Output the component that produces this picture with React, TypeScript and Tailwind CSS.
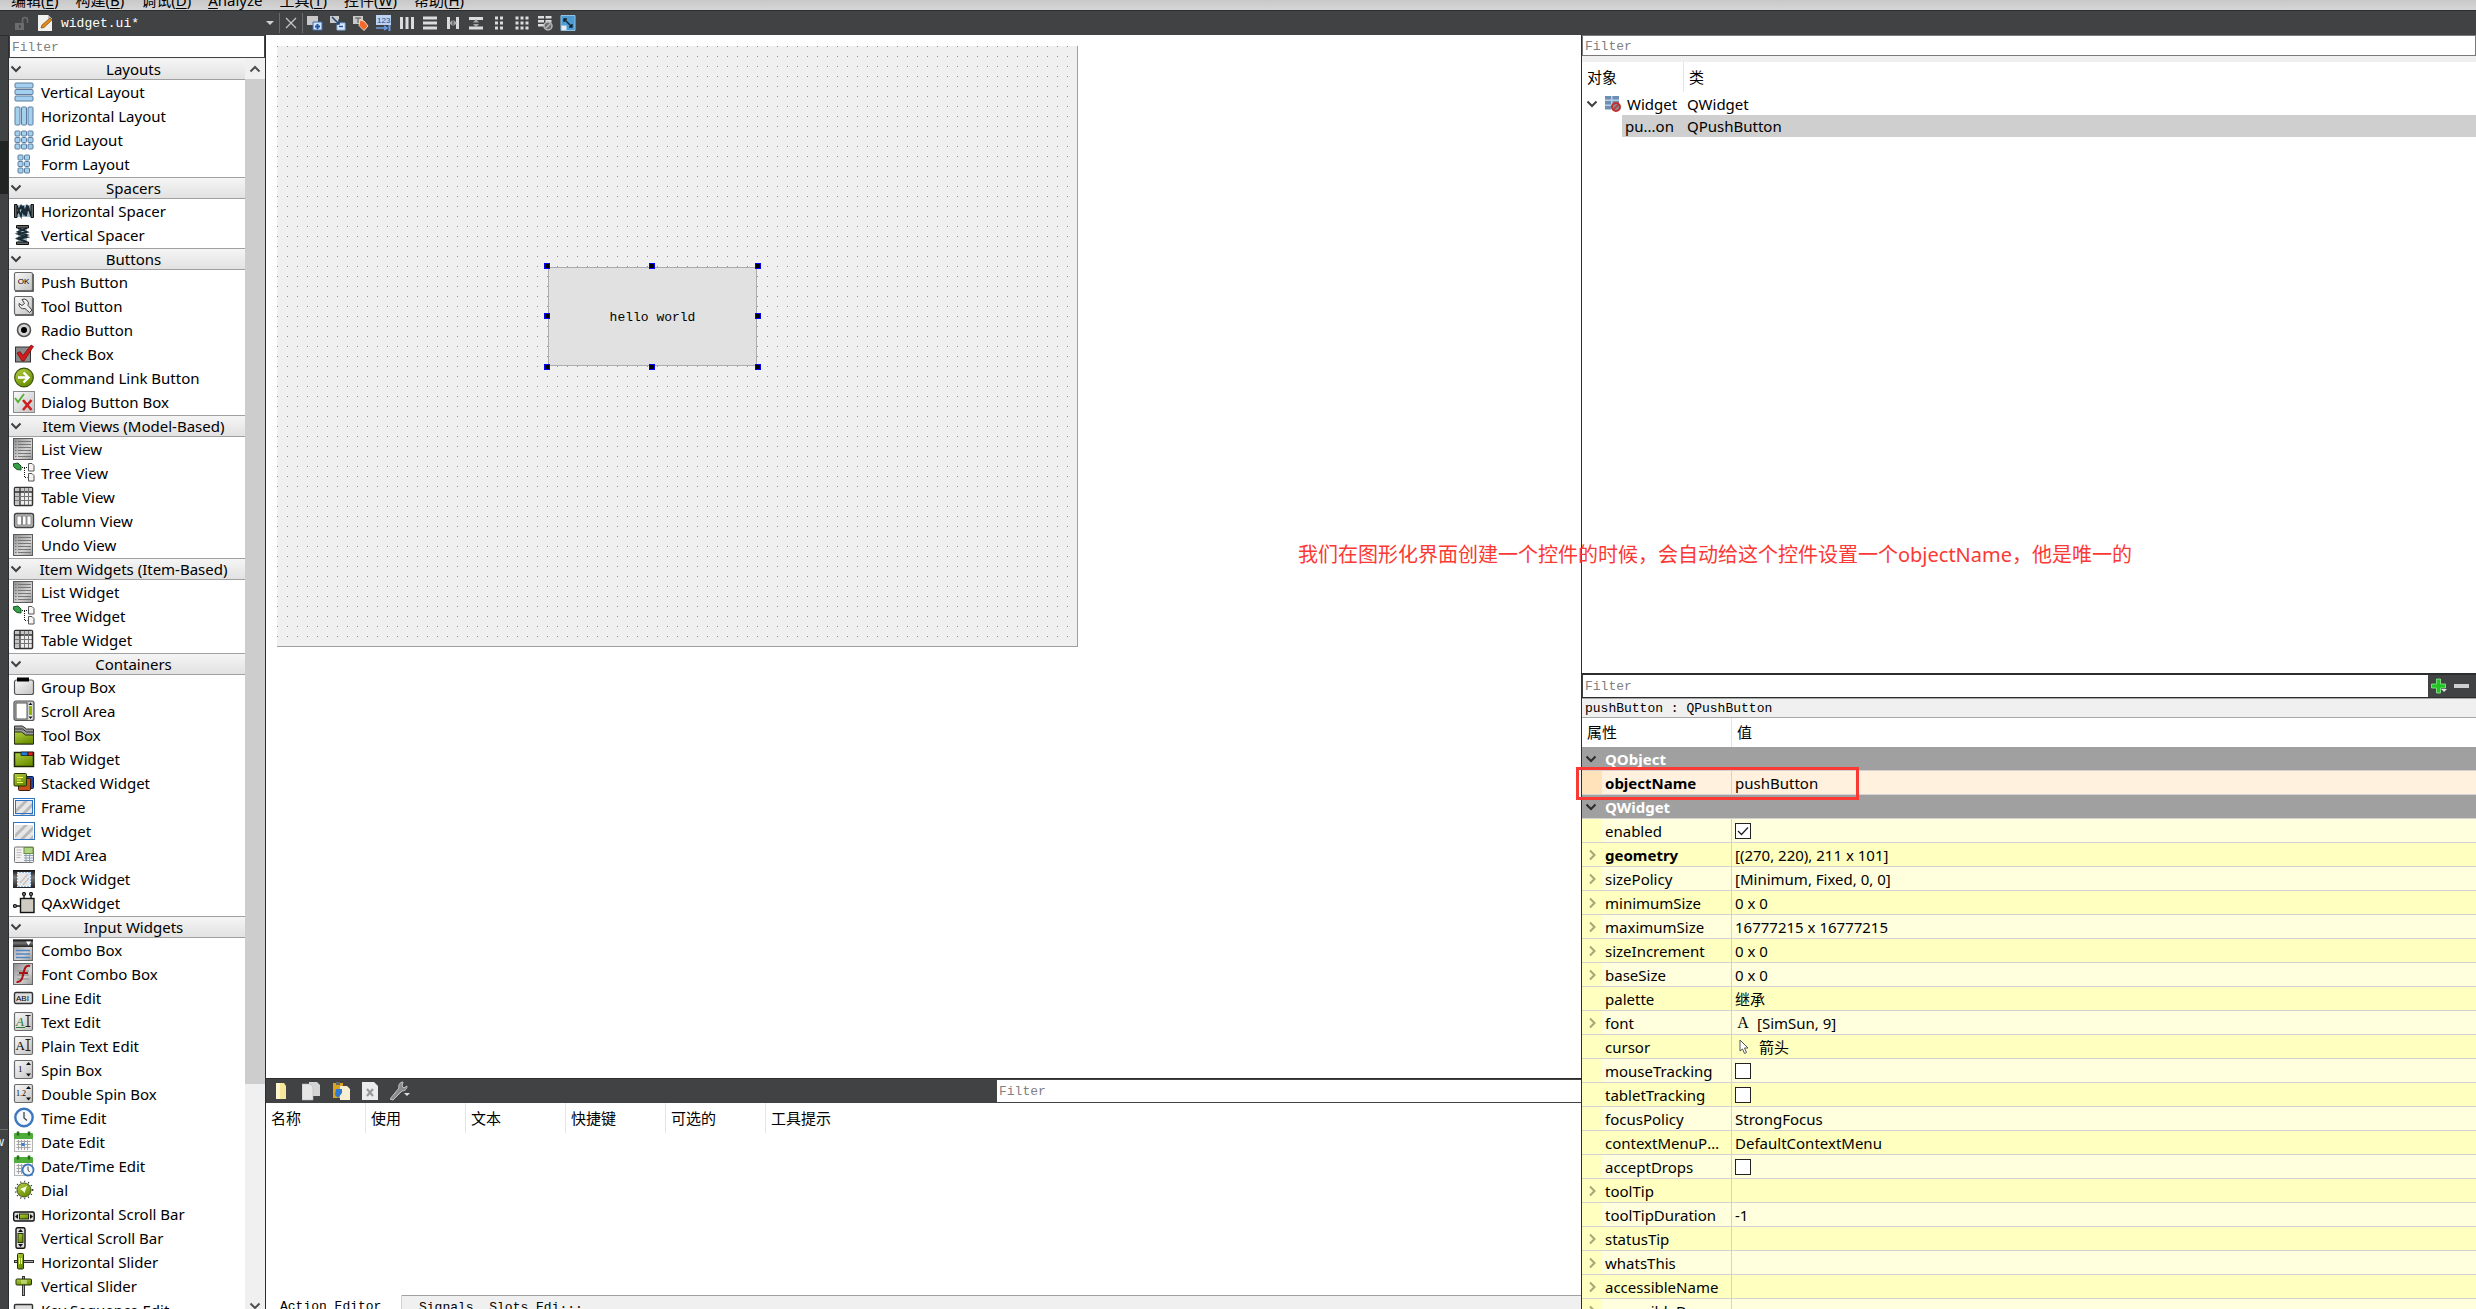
import React from "react";

interface PaletteItem {
  label: string;
  icon: React.ReactNode;
}

interface PaletteGroup {
  title: string;
  items: PaletteItem[];
}

interface PropertyRow {
  name: string;
  value?: React.ReactNode;
  checked?: boolean;
  expandable?: boolean;
  modified?: boolean;
}

const bar = "fill-[#a4d0f0] stroke-[#5f7c9c]";

const Cells: React.FC<{ xs: number[]; ys: number[]; size: number }> = ({ xs, ys, size }) => (
  <g className={bar}>
    {ys.map((y) =>
      xs.map((x) => (
        <rect key={`${x}-${y}`} x={x} y={y} width={size} height={size} rx={1} />
      ))
    )}
  </g>
);

const listIcon = (
  <g>
    <rect x={0.5} y={0.5} width={19} height={21} fill="url(#steel)" stroke="#5c5c5c" />
    <path d="M2 3.5h1.5M2 6.5h1.5M2 9.5h1.5M2 12.5h1.5M2 15.5h1.5M2 18.5h1.5M5 3.5h13M5 6.5h13M5 9.5h13M5 12.5h13M5 15.5h13M5 18.5h13" stroke="#777" />
  </g>
);

const treeIcon = (
  <g>
    <path d="M0 2l5-1 3 3v4l-4-.5-3-2.500z" fill="#35a047" stroke="#14551f" />
    <path d="M9 5.500h5M11.500 6v9.500h3" fill="none" stroke="#111" strokeDasharray="1 1" />
    <path d="M15.500 1.500h3.500l2 2v5.500h-5.500zM15.500 11.500h3.500l2 2v5.500h-5.500z" fill="#f4f4f4" stroke="#555" />
  </g>
);

const tableIcon = (
  <g>
    <rect x={1.5} y={1.5} width={18} height={18} rx={1} fill="#eee" stroke="#333" strokeWidth={1.5} />
    <path d="M2 2h5v17H2zM2 2h17v4H2z" fill="#c4c4c4" />
    <path d="M7 2v17M2 6h17" stroke="#333" strokeWidth={1.3} />
    <path d="M2 10.500h17M2 14.500h17M11.500 2v17M15.500 2v17" stroke="#777" />
  </g>
);

const hatch = (
  <g>
    <rect x={2} y={5} width={18} height={14} fill="#e6e6e6" />
    <path d="M2 14l9-9h4L2 18zM7 19L20 6v4l-9 9zM16 19l4-4v4z" fill="#b9b9b9" />
  </g>
);

const clockFace = (
  <g>
    <circle cx={11} cy={10.5} r={8.7} fill="#f4f8fc" stroke="#3c76bd" strokeWidth={2.4} />
    <path d="M11 5v6l3 2.500" fill="none" stroke="#444" strokeWidth={1.3} />
  </g>
);

const calendar = (
  <g>
    <rect x={1.5} y={3.5} width={18} height={17} fill="#f7f7f7" stroke="#b5b5b5" />
    <rect x={1} y={2} width={19} height={6} rx={1} fill="#4fae3a" />
    <path d="M5 .5v4M16 .5v4" stroke="#2a6d1d" strokeWidth={2.5} />
    <path d="M3.500 10.500h14M3.500 13.500h14M3.500 16.500h14M5.500 9v10M8.500 9v10M11.500 9v10M14.500 9v10" stroke="#a5a5a5" />
  </g>
);

const plate = <rect x={1.5} y={1.5} width={18} height={18} rx={1.5} fill="url(#plate)" stroke="#6a6a6a" strokeWidth={1.2} />;

const spinArrows = <path d="M13 6l2.500-3 2.500 3zM13 14.500l2.500 3 2.500-3z" fill="#111" />;

const groups: PaletteGroup[] = [
  {
    title: "Layouts",
    items: [
      {
        label: "Vertical Layout",
        icon: (
          <g className={bar}>
            <rect x={2} y={2} width={18} height={5} rx={1} />
            <rect x={2} y={8.500} width={18} height={5} rx={1} />
            <rect x={2} y={15} width={18} height={5} rx={1} />
          </g>
        ),
      },
      {
        label: "Horizontal Layout",
        icon: (
          <g className={bar}>
            <rect x={2} y={2} width={5} height={18} rx={1} />
            <rect x={8.500} y={2} width={5} height={18} rx={1} />
            <rect x={15} y={2} width={5} height={18} rx={1} />
          </g>
        ),
      },
      { label: "Grid Layout", icon: <Cells xs={[2, 8.5, 15]} ys={[2, 8.5, 15]} size={5} /> },
      { label: "Form Layout", icon: <Cells xs={[5, 11.5]} ys={[2, 8.5, 15]} size={5} /> },
    ],
  },
  {
    title: "Spacers",
    items: [
      {
        label: "Horizontal Spacer",
        icon: (
          <g>
            <path d="M4 5h14v12H4z" fill="#9fbccb" />
            <path d="M4 6l4 10 2-10 3 10 2-10 3 10M4 14l4-8 3 8 3-8 4 8" fill="none" stroke="#1c2a33" strokeWidth={1.8} />
            <path d="M1.500 4.500h2.500v13H1.500zM18 4.500h2.500v13H18z" fill="#666" stroke="#111" />
          </g>
        ),
      },
      {
        label: "Vertical Spacer",
        icon: (
          <g>
            <path d="M5 4h9v14H5z" fill="#9fbccb" />
            <path d="M5 4l9 4-9 2 9 3-9 2 9 3M14 4l-9 4 9 3-9 3 9 4" fill="none" stroke="#1c2a33" strokeWidth={1.8} />
            <path d="M3.500 1.500h12v2.500h-12zM3.500 18h12v2.500h-12z" fill="#666" stroke="#111" />
          </g>
        ),
      },
    ],
  },
  {
    title: "Buttons",
    items: [
      {
        label: "Push Button",
        icon: (
          <g>
            <path d="M2 20h18V3" fill="none" stroke="#333" strokeWidth={1.5} />
            {plate}
            <text x={10.5} y={12.5} textAnchor="middle" fontSize={8} className="font-['Liberation_Sans']">OK</text>
          </g>
        ),
      },
      {
        label: "Tool Button",
        icon: (
          <g>
            <path d="M2 20h18V3" fill="none" stroke="#333" strokeWidth={1.5} />
            {plate}
            <path d="M9 4.500a4.500 4.500 0 0 1 6 6l4 4.500-2.500 2.500-4.500-4a4.500 4.500 0 0 1-6-5l3 2 2.500-2z" fill="#eee" stroke="#444" />
          </g>
        ),
      },
      {
        label: "Radio Button",
        icon: (
          <g>
            <circle cx={11} cy={11} r={6.5} fill="#d6d6d6" stroke="#555" strokeWidth={1.6} />
            <circle cx={11} cy={11} r={3} fill="#000" />
          </g>
        ),
      },
      {
        label: "Check Box",
        icon: (
          <g>
            <rect x={2.5} y={4} width={15} height={15} fill="#8a8a8a" stroke="#333" />
            <path d="M4 10l3-1.500 3 4L18 2l2.500 1.500L11 18H9z" fill="#d5191b" stroke="#6d0b0c" strokeWidth={0.7} />
          </g>
        ),
      },
      {
        label: "Command Link Button",
        icon: (
          <g>
            <circle cx={11} cy={10.5} r={9.3} fill="url(#lime)" stroke="#3d5208" strokeWidth={1.2} />
            <path d="M5 10.500h10M10.500 5.500l5 5-5 5" fill="none" stroke="#fff" strokeWidth={2.4} />
          </g>
        ),
      },
      {
        label: "Dialog Button Box",
        icon: (
          <g>
            <rect x={0.5} y={0.5} width={21} height={21} fill="url(#plate)" stroke="#8a8a8a" />
            <path d="M2 7l3 4 6-8" fill="none" stroke="#5bb03a" strokeWidth={2} />
            <path d="M10 9l8.500 10M18.500 9L10 19" stroke="#cc1f22" strokeWidth={2.6} />
          </g>
        ),
      },
    ],
  },
  {
    title: "Item Views (Model-Based)",
    items: [
      { label: "List View", icon: listIcon },
      { label: "Tree View", icon: treeIcon },
      { label: "Table View", icon: tableIcon },
      {
        label: "Column View",
        icon: (
          <g>
            <rect x={1.5} y={3.5} width={19} height={14} rx={2} fill="#bbb" stroke="#444" strokeWidth={1.4} />
            <path d="M4 6h4.500v9H4zM9.500 6H13v9H9.500zM14 6h4v9h-4z" fill="#fff" stroke="#777" strokeWidth={0.8} />
          </g>
        ),
      },
      { label: "Undo View", icon: listIcon },
    ],
  },
  {
    title: "Item Widgets (Item-Based)",
    items: [
      { label: "List Widget", icon: listIcon },
      { label: "Tree Widget", icon: treeIcon },
      { label: "Table Widget", icon: tableIcon },
    ],
  },
  {
    title: "Containers",
    items: [
      {
        label: "Group Box",
        icon: (
          <g>
            <rect x={1.5} y={4} width={19} height={14.500} rx={2} fill="url(#plate)" stroke="#555" strokeWidth={1.2} />
            <rect x={4} y={1.5} width={12} height={4} fill="#000" />
          </g>
        ),
      },
      {
        label: "Scroll Area",
        icon: (
          <g>
            <rect x={1} y={1} width={20} height={19.500} rx={2} fill="#b9b9b9" stroke="#555" strokeWidth={1.2} />
            <rect x={3} y={3} width={11} height={16} fill="#fff" stroke="#555" />
            <rect x={15.500} y={2.500} width={4} height={17} fill="#eee" />
            <path d="M15.500 5l2-2.500 2 2.500zM15.500 16.500l2 2.500 2-2.500z" fill="#111" />
            <rect x={16} y={6} width={3} height={9} fill="#8ab800" />
          </g>
        ),
      },
      {
        label: "Tool Box",
        icon: (
          <g>
            <path d="M1.500 2h8l4 3h7v15h-19z" fill="#999" stroke="#333" />
            <path d="M1.500 5h8l4 3h7" fill="none" stroke="#333" />
            <path d="M1.500 8h7l4 3h8v9h-19z" fill="url(#lime)" stroke="#26330a" />
          </g>
        ),
      },
      {
        label: "Tab Widget",
        icon: (
          <g>
            <rect x={1.500} y={4.500} width={19} height={14} fill="url(#lime)" stroke="#1c2606" strokeWidth={1.5} />
            <path d="M8 4h7v3.500H8z" fill="#1c7fe0" stroke="#111" strokeWidth={0.7} />
            <path d="M15 4h5v3.500h-5z" fill="#e02020" stroke="#111" strokeWidth={0.7} />
          </g>
        ),
      },
      {
        label: "Stacked Widget",
        icon: (
          <g>
            <rect x={8.500} y={4.500} width={12} height={12} rx={1} fill="#1b48a8" stroke="#0a1a3d" />
            <rect x={5.500} y={6.500} width={12} height={12} rx={1} fill="#c4501b" stroke="#461a06" />
            <rect x={1} y={1.500} width={12.500} height={12.500} rx={1} fill="url(#lime)" stroke="#26330a" />
            <path d="M4 5.500h6M4 8h4M4 10.500h6" stroke="#f4ff66" />
          </g>
        ),
      },
      {
        label: "Frame",
        icon: (
          <g>
            <rect x={0.5} y={2.500} width={21} height={17} fill="#fff" stroke="#2f74c4" />
            {hatch}
            <rect x={2.5} y={4.500} width={17} height={13} fill="none" stroke="#2f74c4" />
          </g>
        ),
      },
      {
        label: "Widget",
        icon: (
          <g>
            <rect x={0.5} y={2.500} width={21} height={17} fill="#fff" stroke="#2f74c4" />
            {hatch}
          </g>
        ),
      },
      {
        label: "MDI Area",
        icon: (
          <g>
            <rect x={1.500} y={3} width={19} height={15.500} rx={1} fill="#f3f3f3" stroke="#777" />
            <rect x={11} y={3.500} width={9} height={6} fill="#aed581" stroke="#6c8f48" />
            <path d="M3.500 6h5M3.500 8.500h5M3.500 11h5M3.500 13.500h4" stroke="#bbb" />
            <path d="M11 11.500h9M11 14h9M11 16.500h9M13 10v8M16.500 10v8" stroke="#8fa3b5" />
          </g>
        ),
      },
      {
        label: "Dock Widget",
        icon: (
          <g>
            <rect x={0} y={2} width={22} height={18} fill="url(#ebony)" />
            <rect x={4.500} y={4.500} width={13} height={14} fill="#e8e8e8" stroke="#2f74c4" />
            <rect x={4.500} y={4.500} width={13} height={14} fill="none" stroke="#fff" strokeDasharray="2 1" />
            <path d="M7 15l8-9M10 17l6-7" stroke="#c4c4c4" strokeWidth={1.5} />
          </g>
        ),
      },
      {
        label: "QAxWidget",
        icon: (
          <g stroke="#111" strokeWidth={1.4}>
            <rect x={7.500} y={6.500} width={13.500} height={14} fill="#cfcac2" />
            <path d="M11 6V3M18 6V3M7 14H3" />
            <circle cx={11} cy={2} r={1.4} fill="#fff" />
            <circle cx={18} cy={2} r={1.4} fill="#fff" />
            <circle cx={2} cy={14} r={1.4} fill="#fff" />
          </g>
        ),
      },
    ],
  },
  {
    title: "Input Widgets",
    items: [
      {
        label: "Combo Box",
        icon: (
          <g>
            <rect x={0.5} y={0.5} width={19} height={21} fill="url(#steel)" stroke="#666" />
            <rect x={0} y={1} width={20} height={7} fill="url(#ebony)" />
            <path d="M13 2.500h5l-2.500 4z" fill="#fff" />
            <path d="M3 11.500h14M3 15h14M3 18.500h14" stroke="#4f86c6" strokeWidth={1.6} />
          </g>
        ),
      },
      {
        label: "Font Combo Box",
        icon: (
          <g>
            <rect x={0.500} y={0.5} width={19} height={21} fill="url(#steel)" stroke="#666" />
            <path d="M4 8h12M4 12h12M4 16h12" stroke="#999" strokeWidth={1.5} />
            <path d="M17 3c-4-1.500-5.500 2-6.500 7s-2 9.500-7 9M6 10h9" fill="none" stroke="#a81216" strokeWidth={2} />
          </g>
        ),
      },
      {
        label: "Line Edit",
        icon: (
          <g>
            <rect x={1.500} y={5.500} width={18} height={11} rx={1.5} fill="#ddd" stroke="#333" strokeWidth={1.4} />
            <text x={3} y={14} fontSize={8} className="font-['Liberation_Sans']">ABI</text>
          </g>
        ),
      },
      {
        label: "Text Edit",
        icon: (
          <g>
            {plate}
            <text x={3} y={15} fontSize={13} fontStyle="italic" className="fill-[#2f7d32] font-['Liberation_Serif']">A</text>
            <path d="M3 16.500h9" stroke="#2f7d32" />
            <path d="M12.500 4.500h5M15 4.500v11M12.500 15.500h5" stroke="#222" strokeWidth={1.2} />
          </g>
        ),
      },
      {
        label: "Plain Text Edit",
        icon: (
          <g>
            {plate}
            <text x={2.500} y={15} fontSize={13} className="font-['Liberation_Serif']">A</text>
            <path d="M12.500 4.500h5M15 4.500v11M12.500 15.500h5" stroke="#222" strokeWidth={1.2} />
          </g>
        ),
      },
      {
        label: "Spin Box",
        icon: (
          <g>
            {plate}
            <text x={5} y={13} fontSize={9} className="font-['Liberation_Serif']">1</text>
            {spinArrows}
          </g>
        ),
      },
      {
        label: "Double Spin Box",
        icon: (
          <g>
            {plate}
            <text x={3} y={13} fontSize={8} className="font-['Liberation_Serif']">1.2</text>
            {spinArrows}
          </g>
        ),
      },
      { label: "Time Edit", icon: clockFace },
      {
        label: "Date Edit",
        icon: (
          <g>
            {calendar}
            <rect x={8.500} y={12} width={3} height={3} fill="#3b7ddd" />
          </g>
        ),
      },
      {
        label: "Date/Time Edit",
        icon: (
          <g>
            {calendar}
            <circle cx={15} cy={15} r={5.500} fill="#f4f8fc" stroke="#3c76bd" strokeWidth={1.8} />
            <path d="M15 11.500V15l1.500 2" fill="none" stroke="#444" />
          </g>
        ),
      },
      {
        label: "Dial",
        icon: (
          <g>
            <circle cx={11} cy={11} r={8.500} fill="none" stroke="#333" strokeWidth={1.6} strokeDasharray="1 3" />
            <circle cx={11} cy={11} r={7} fill="url(#lime)" stroke="#44591a" />
            <path d="M7 10l7-3-2.500 7-1.500-2z" fill="#f6ffe0" />
          </g>
        ),
      },
      {
        label: "Horizontal Scroll Bar",
        icon: (
          <g>
            <rect x={0.700} y={9} width={20.500} height={9} rx={1.500} fill="#ddd" stroke="#111" strokeWidth={1.4} />
            <path d="M5 11v5l-3-2.500zM17 11v5l3-2.500z" fill="#111" />
            <rect x={6.500} y={11} width={9} height={5} fill="url(#lime)" stroke="#26330a" />
          </g>
        ),
      },
      {
        label: "Vertical Scroll Bar",
        icon: (
          <g>
            <rect x={3} y={0.700} width={9} height={20.500} rx={1.500} fill="#ddd" stroke="#111" strokeWidth={1.4} />
            <path d="M5 5h5L7.500 2zM5 17h5l-2.500 3z" fill="#111" />
            <rect x={5} y={6.500} width={5} height={9} fill="url(#lime)" stroke="#26330a" />
          </g>
        ),
      },
      {
        label: "Horizontal Slider",
        icon: (
          <g>
            <path d="M1 10.500h20" stroke="#333" strokeWidth={3} />
            <path d="M2 10.500h18" stroke="#aaa" />
            <rect x={4.500} y={2.500} width={6} height={15.500} rx={1} fill="url(#lime)" stroke="#26330a" />
            <path d="M6.500 7v6M8.500 7v6" stroke="#e8f5b5" />
          </g>
        ),
      },
      {
        label: "Vertical Slider",
        icon: (
          <g>
            <path d="M10.500 1v20" stroke="#333" strokeWidth={3} />
            <path d="M10.500 2v18" stroke="#aaa" />
            <rect x={3} y={4} width={15.500} height={6} rx={1} fill="url(#lime)" stroke="#26330a" />
            <path d="M8 6h6M8 8h6" stroke="#e8f5b5" />
          </g>
        ),
      },
      {
        label: "Key Sequence Edit",
        icon: <rect x={1.500} y={5.500} width={18} height={12} rx={1} fill="#ddd" stroke="#333" strokeWidth={1.4} />,
      },
    ],
  },
];

const light = "#dcdcdc";

const formTools: PaletteItem[] = [
  {
    label: "Edit Widgets",
    icon: (
      <g>
        <path d="M0 1h11v9H0z" fill="#c9c9c9" />
        <path d="M6 7h9v8H6z" fill="#cfe2ff" stroke="#3d6fb5" />
        <path d="M10.500 9v5M8 11.500h5" stroke="#2456a0" strokeWidth={2} />
      </g>
    ),
  },
  {
    label: "Edit Signals/Slots",
    icon: (
      <g>
        <path d="M0 1h9v7H0z" fill="#c9c9c9" />
        <path d="M7 8h8v7H7z" fill="#dbe9ff" stroke="#8fb4e8" />
        <path d="M2 2l7 7M9 4.500V9H4.500" stroke="#24486f" strokeWidth={1.6} fill="none" />
        <path d="M9 11.500h4" stroke="#2456a0" strokeWidth={1.5} />
      </g>
    ),
  },
  {
    label: "Edit Buddies",
    icon: (
      <g>
        <path d="M0 1h10v8H0z" fill="#c9c9c9" />
        <path d="M2 3h6M5 3v5" stroke="#555" />
        <path d="M7 5l4 1 4 5-4 4.500-5-5z" fill="#f3692a" stroke="#fbd9c6" />
      </g>
    ),
  },
  {
    label: "Edit Tab Order",
    icon: (
      <g>
        <path d="M0 0h15v10H0z" fill="#bdd3f2" />
        <text x={1} y={8} fontSize={8} className="fill-[#1f4b91] font-['Liberation_Sans']">123</text>
        <path d="M0 13h10M8 11l3 2-3 2" stroke="#6d9ee8" strokeWidth={1.5} fill="none" />
        <path d="M13.500 10v6" stroke="#6d9ee8" strokeWidth={2} />
      </g>
    ),
  },
  { label: "Lay Out Horizontally", icon: <path d="M1 2h3v12H1zM6.500 2h3v12h-3zM12 2h3v12h-3z" fill={light} /> },
  { label: "Lay Out Vertically", icon: <path d="M1 1.500h14v3H1zM1 6.500h14v3H1zM1 11.500h14v3H1z" fill={light} /> },
  {
    label: "Lay Out Horizontally in Splitter",
    icon: (
      <g>
        <path d="M2 2h3v12H2zM11 2h3v12h-3z" fill={light} />
        <path d="M4 8l3.500-3v6zM12 8L8.500 5v6z" fill="#a8a8a8" />
      </g>
    ),
  },
  {
    label: "Lay Out Vertically in Splitter",
    icon: (
      <g>
        <path d="M1 2h14v3H1zM1 11.500h14v3H1z" fill={light} />
        <path d="M8 4l3 3.500H5zM8 12.500l3-3.500H5z" fill="#a8a8a8" />
      </g>
    ),
  },
  { label: "Lay Out in a Form Layout", icon: <path d="M4 1.500h3v3H4zM9 1.500h3v3H9zM4 6.500h3v3H4zM9 6.500h3v3H9zM4 11.500h3v3H4zM9 11.500h3v3H9z" fill={light} /> },
  {
    label: "Lay Out in a Grid",
    icon: (
      <path
        d="M1.500 1.500h3v3h-3zM6.500 1.500h3v3h-3zM11.500 1.500h3v3h-3zM1.500 6.500h3v3h-3zM6.500 6.500h3v3h-3zM11.500 6.500h3v3h-3zM1.500 11.500h3v3h-3zM6.500 11.500h3v3h-3zM11.500 11.500h3v3h-3z"
        fill={light}
      />
    ),
  },
  {
    label: "Break Layout",
    icon: (
      <g>
        <path d="M1 1h6v2.500H1zM8.500 1h6v2.500h-6zM1 5h6v2.500H1zM8.500 5h6v2.500h-6zM1 9h6v2.500H1z" fill={light} />
        <circle cx={11} cy={11} r={4} fill="#6e6e6e" stroke="#b5b5b5" strokeWidth={1.5} />
        <path d="M8.500 13.500l5-5" stroke="#b5b5b5" strokeWidth={1.5} />
      </g>
    ),
  },
  {
    label: "Adjust Size",
    icon: (
      <g>
        <path d="M1 .5h14v15H1z" fill="#4d9bd0" stroke="#8fc3e6" />
        <path d="M1.500 10.500h5V15h-5z" fill="#e4eef5" />
        <path d="M4 4l8 8M4 7V4h3M12 9v3H9" stroke="#10222f" strokeWidth={1.4} fill="none" />
      </g>
    ),
  },
];

const menus = [
  ["编辑", "E"],
  ["构建", "B"],
  ["调试", "D"],
  ["", "Analyze"],
  ["工具", "T"],
  ["控件", "W"],
  ["帮助", "H"],
];

const properties: PropertyRow[] = [
  { name: "enabled", checked: true },
  { name: "geometry", value: "[(270, 220), 211 x 101]", expandable: true, modified: true },
  { name: "sizePolicy", value: "[Minimum, Fixed, 0, 0]", expandable: true },
  { name: "minimumSize", value: "0 x 0", expandable: true },
  { name: "maximumSize", value: "16777215 x 16777215", expandable: true },
  { name: "sizeIncrement", value: "0 x 0", expandable: true },
  { name: "baseSize", value: "0 x 0", expandable: true },
  { name: "palette", value: "继承" },
  {
    name: "font",
    value: (
      <span className="flex items-center gap-1.5">
        <span className="w-4 text-center font-['Liberation_Serif'] text-base leading-5">A</span>
        [SimSun, 9]
      </span>
    ),
    expandable: true,
  },
  {
    name: "cursor",
    value: (
      <span className="flex items-center gap-2">
        <svg className="size-4" viewBox="0 0 16 16">
          <path d="M5 1v11l2.500-2 2 4.500 2-1-2-4.500H13z" fill="#fff" stroke="#555" />
        </svg>
        箭头
      </span>
    ),
  },
  { name: "mouseTracking", checked: false },
  { name: "tabletTracking", checked: false },
  { name: "focusPolicy", value: "StrongFocus" },
  { name: "contextMenuPolicy", value: "DefaultContextMenu" },
  { name: "acceptDrops", checked: false },
  { name: "toolTip", expandable: true },
  { name: "toolTipDuration", value: "-1" },
  { name: "statusTip", expandable: true },
  { name: "whatsThis", expandable: true },
  { name: "accessibleName", expandable: true },
  { name: "accessibleDescription", expandable: true },
];

const actionColumns = ["名称", "使用", "文本", "快捷键", "可选的", "工具提示"];

const handles = [
  "left-[267px] top-[217px]",
  "left-[372px] top-[217px]",
  "left-[478px] top-[217px]",
  "left-[267px] top-[267px]",
  "left-[478px] top-[267px]",
  "left-[267px] top-[318px]",
  "left-[372px] top-[318px]",
  "left-[478px] top-[318px]",
];

const Chevron: React.FC<{ className: string; d?: string }> = ({ className, d = "M1.500 3.500L6 8l4.500-4.500" }) => (
  <svg className={`size-3 shrink-0 fill-none stroke-2 ${className}`} viewBox="0 0 12 12">
    <path d={d} />
  </svg>
);

const FilterInput: React.FC<{ label: string; className: string }> = ({ label, className }) => (
  <input
    type="text"
    aria-label={label}
    placeholder="Filter"
    className={`min-w-0 bg-white px-0.5 pt-0.5 font-['Liberation_Mono','Noto_Sans_CJK_SC',monospace] text-[13px] text-black outline-none placeholder:text-[#808080] ${className}`}
  />
);

const GradientDefs = () => (
  <svg className="absolute size-0" aria-hidden="true">
    <defs>
      <linearGradient id="plate" x2="1" y2="1">
        <stop stopColor="#fafafa" />
        <stop offset="1" stopColor="#c2c2c2" />
      </linearGradient>
      <linearGradient id="steel" x2="1" y2="1">
        <stop stopColor="#8c8c8c" />
        <stop offset=".6" stopColor="#d4d4d4" />
        <stop offset="1" stopColor="#9a9a9a" />
      </linearGradient>
      <linearGradient id="lime" x2="0.6" y2="1">
        <stop stopColor="#b4cf45" />
        <stop offset="1" stopColor="#6a8f00" />
      </linearGradient>
      <linearGradient id="ebony" x2="0" y2="1">
        <stop stopColor="#111" />
        <stop offset=".4" stopColor="#777" />
        <stop offset="1" stopColor="#222" />
      </linearGradient>
    </defs>
  </svg>
);

const MenuBar = () => (
  <nav className="flex h-[11px] shrink-0 items-end gap-[17px] overflow-hidden border-b border-[#2c2d2e] bg-linear-to-b from-[#c8c8c8] to-[#d6d6d6] pl-[11px] leading-5">
    {menus.map(([label, key]) => (
      <button key={key} type="button" className="h-5 whitespace-nowrap">
        {label ? (
          <>
            {label}(<u className="underline-offset-2">{key}</u>)
          </>
        ) : (
          <>
            <u className="underline-offset-2">{key[0]}</u>
            {key.slice(1)}
          </>
        )}
      </button>
    ))}
  </nav>
);

const EditorToolbar = () => (
  <div className="flex h-6 shrink-0 items-center bg-[#404244]">
    <div className="flex w-[270px] items-center gap-2 pl-[14px]">
      <svg className="size-[15px]" viewBox="0 0 15 15">
        <path d="M1 7h9v7H1z" fill="#6b6c6e" />
        <path d="M8.500 7V4a2.500 2.500 0 0 1 5 0v3" fill="none" stroke="#6b6c6e" strokeWidth={1.6} />
        <path d="M5 9h1.500v3H5z" fill="#404244" />
      </svg>
      <svg className="size-4" viewBox="0 0 16 16">
        <path d="M1 0h10l4 4v12H1z" fill="#f1f1ee" />
        <path d="M11 0v4h4z" fill="#c4c4c0" />
        <path d="M4 13l1-3 8-7 2 2-8 7.500z" fill="#e08a1e" stroke="#7a4a10" strokeWidth={0.7} />
      </svg>
      <span className="flex-1 pt-0.5 font-['Liberation_Mono',monospace] text-[13px] text-white">widget.ui*</span>
      <svg className="-mr-1 h-1 w-2" viewBox="0 0 8 4">
        <path d="M0 0h8L4 4z" fill="#d0d0d0" />
      </svg>
    </div>
    <div className="ml-[9px] flex h-5 w-6 items-center justify-center border-x border-[#6a6b6d]">
      <button type="button" aria-label="Close Document" className="size-3">
        <svg viewBox="0 0 12 12">
          <path d="M1 1l10 10M11 1L1 11" stroke="#c8c8c8" strokeWidth={1.2} />
        </svg>
      </button>
    </div>
    <div className="ml-1 flex gap-[7px]">
      {formTools.map(({ label, icon }) => (
        <button key={label} type="button" aria-label={label} className="size-4">
          <svg viewBox="0 0 16 16">{icon}</svg>
        </button>
      ))}
    </div>
  </div>
);

const ModeStrip = () => (
  <div className="flex w-[9px] shrink-0 flex-col overflow-hidden border-r border-[#2c2d2e] bg-[#404244]">
    <div className="h-[106px] border-t border-[#2c2d2e]" />
    <div className="h-[53px] bg-[#222423]" />
    <div className="h-[935px]" />
    <div className="flex justify-end border-t border-[#6a6b6d] pt-1 pr-1 font-['Liberation_Sans'] text-xs text-white">w</div>
  </div>
);

const WidgetBox = () => (
  <aside className="flex w-[257px] shrink-0 flex-col border-r border-[#2c2d2e]">
    <FilterInput label="Filter widgets" className="h-[23px] shrink-0 border border-[#404244]" />
    <div className="flex min-h-0 flex-1">
      <div className="min-w-0 flex-1 overflow-hidden">
        {groups.map(({ title, items }, index) => (
          <section key={title} className="pb-px">
            <button
              type="button"
              className={`flex h-[22px] w-full items-center border-y border-b-[#a0a0a0] bg-linear-to-b from-[#f5f5f5] to-[#e2e2e2] pl-px ${
                index === 0 ? "border-t-[#f0f0f0]" : "border-t-[#a0a0a0]"
              }`}
            >
              <Chevron className="stroke-[#404040]" />
              <span className="flex-1 text-center leading-5">{title}</span>
            </button>
            <ul>
              {items.map(({ label, icon }) => (
                <li key={label} className="flex h-6 items-center gap-1.5 pl-1 whitespace-nowrap">
                  <svg className="size-[22px] shrink-0" viewBox="0 0 22 22">
                    {icon}
                  </svg>
                  {label}
                </li>
              ))}
            </ul>
          </section>
        ))}
      </div>
      <div className="flex w-5 flex-col items-center bg-[#f0f0f0]">
        <div className="flex h-[21px] items-center">
          <Chevron className="stroke-[#505050]" d="M1.500 8.500L6 4l4.500 4.500" />
        </div>
        <div className="w-full flex-1 bg-[#cdcdcd]" />
        <div className="flex h-[225px] items-end">
          <Chevron className="stroke-[#505050]" d="M1.500 6.500L6 11l4.500-4.500" />
        </div>
      </div>
    </div>
  </aside>
);

const FormCanvas = () => (
  <div className="min-h-0 flex-1 overflow-hidden pt-[11px] pl-[11px]">
    <div className="relative h-[601px] w-[801px] border-r border-b border-[#a0a0a0] bg-[#f0f0f0]">
      <svg className="absolute size-full">
        <defs>
          <pattern id="dots" width={10} height={10} patternUnits="userSpaceOnUse">
            <rect width={1} height={1} fill="#8c8c8c" />
          </pattern>
        </defs>
        <rect width="100%" height="100%" fill="url(#dots)" />
      </svg>
      <button
        type="button"
        className="absolute top-[221px] left-[271px] h-[99px] w-[209px] border border-[#adadad] bg-[#e1e1e1] pt-0.5 font-['Liberation_Mono',monospace] text-[13px]"
      >
        hello world
      </button>
      {handles.map((place) => (
        <span key={place} className={`absolute size-1.5 border border-[#0000ff] bg-black ${place}`} />
      ))}
    </div>
  </div>
);

const ActionEditor = () => (
  <section className="flex h-[231px] shrink-0 flex-col">
    <div className="flex h-[25px] shrink-0 border-t border-[#2c2d2e] bg-[#404244]">
      <div className="flex flex-1 items-center gap-3 pl-2">
        <button type="button" aria-label="New action" className="w-4">
          <svg className="h-5 w-4" viewBox="0 0 16 20">
            <path d="M2 2h8l2 3v13H2z" fill="#f7e79a" />
            <path d="M2 2h4v16H2z" fill="#fdf6cf" />
          </svg>
        </button>
        <button type="button" aria-label="Copy action" className="w-[18px]">
          <svg className="h-5 w-[18px]" viewBox="0 0 18 20">
            <path d="M7 1h8l3 3v11H7z" fill="#d4d4d4" />
            <path d="M0 3h8l3 3v13H0z" fill="#e6e6e6" stroke="#bbb" strokeWidth={0.6} />
          </svg>
        </button>
        <button type="button" aria-label="Paste action" className="w-[18px]">
          <svg className="h-5 w-[18px]" viewBox="0 0 18 20">
            <path d="M1 2h10v15H1z" fill="#d9a520" />
            <path d="M8 5h7l3 3v11H8z" fill="#f6efd2" />
            <path d="M4 8h6v4l-4 5-3-3z" fill="#2c7ad6" />
            <path d="M4 1h4v3H4z" fill="#666" />
          </svg>
        </button>
        <button type="button" aria-label="Delete action" className="w-4">
          <svg className="h-5 w-4" viewBox="0 0 16 20">
            <path d="M0 1h12l4 4v14H0z" fill="#ececec" />
            <path d="M5 8l6 7M11 8l-6 7" stroke="#999" strokeWidth={2.2} />
          </svg>
        </button>
        <button type="button" aria-label="Configure" className="w-5">
          <svg className="h-5 w-5" viewBox="0 0 20 20">
            <path d="M0 18l9-11c-1-3 1-6 4-6l-1 4 2 2 3-2c0 4-3 5-5 5L3 19z" fill="#8c8c8c" stroke="#c4c4c4" />
            <path d="M14 12h6l-3 3z" fill="#e0e0e0" />
          </svg>
        </button>
      </div>
      <FilterInput label="Filter actions" className="mt-px mb-px w-[584px]" />
    </div>
    <table className="table-fixed self-start border-separate border-spacing-0">
      <thead>
        <tr>
          {actionColumns.map((column) => (
            <th key={column} scope="col" className="h-[30px] w-[100px] border-r border-[#e5e5e5] pl-[5px] text-left font-normal last:border-0">
              {column}
            </th>
          ))}
        </tr>
      </thead>
    </table>
    <div className="flex-1" />
    <div role="tablist" className="flex h-[14px] shrink-0 overflow-hidden bg-[#f0f0f0] font-['Liberation_Mono',monospace] text-[13px] leading-6">
      <button type="button" role="tab" aria-selected="true" className="h-6 w-[136px] border-r border-[#d0d0d0] bg-white pl-[14px] text-left">
        Action Editor
      </button>
      <button type="button" role="tab" aria-selected="false" className="h-6 flex-1 border-t border-[#a0a0a0] pl-[17px] text-left leading-5">
        Signals&nbsp;<u>&nbsp;</u>Slots Edi···
      </button>
    </div>
  </section>
);

const ObjectInspector = () => (
  <section className="h-[638px] shrink-0">
    <FilterInput label="Filter objects" className="block h-[21px] w-full border border-[#7a7a7a]" />
    <div className="h-[6px] bg-[#f0f0f0]" />
    <table className="w-full table-fixed border-separate border-spacing-0">
      <colgroup>
        <col className="w-[102px]" />
        <col />
      </colgroup>
      <thead>
        <tr>
          <th scope="col" className="h-[30px] border-r border-[#e5e5e5] pl-[5px] text-left font-normal">对象</th>
          <th scope="col" className="pl-[5px] text-left font-normal">类</th>
        </tr>
      </thead>
      <tbody>
        <tr>
          <td className="h-[23px] pl-1 leading-5">
            <div className="flex items-center whitespace-nowrap">
              <Chevron className="stroke-[#404040]" />
              <svg className="mx-[6px] ml-[7px] size-4 shrink-0" viewBox="0 0 16 16">
                <path d="M0 0h14v12H0z" fill="#b9cfe6" />
                <path d="M0 0h6v3.500H0zM7.500 0H14v3.500H7.500zM0 5h6v3.500H0zM7.500 5H14v3.500H7.500zM0 10h6v3.500H0z" fill="#6d8fb3" />
                <circle cx={11} cy={11} r={4} fill="#8a8a8a" stroke="#c42f2f" strokeWidth={2} />
                <path d="M8 14l6-6" stroke="#c42f2f" strokeWidth={1.5} />
              </svg>
              Widget
            </div>
          </td>
          <td className="pl-[3px] leading-5">QWidget</td>
        </tr>
        <tr>
          <td className="pl-10">
            <div className="h-[22px] bg-[#cfcfcf] pl-[3px] leading-[22px]">pu...on</div>
          </td>
          <td>
            <div className="h-[22px] bg-[#cfcfcf] pl-[3px] leading-[22px]">QPushButton</div>
          </td>
        </tr>
      </tbody>
    </table>
  </section>
);

const GroupRow: React.FC<{ title: string }> = ({ title }) => (
  <tr className="bg-[#a0a0a0] text-white">
    <td className="h-6 border-b border-[#d3d3d3] pl-[3px]">
      <Chevron className="stroke-[#2c2c2c]" />
    </td>
    <th scope="rowgroup" colSpan={2} className="border-b border-[#d3d3d3] pl-[3px] text-left font-bold leading-5">
      {title}
    </th>
  </tr>
);

const PropertyEditor = () => (
  <section className="min-h-0 flex-1 overflow-hidden">
    <div className="flex h-[25px] border-t-2 border-b border-[#2c2d2e] bg-[#404244] pl-px">
      <FilterInput label="Filter properties" className="flex-1" />
      <div className="flex w-12 items-center gap-[6px] pl-[3px]">
        <button type="button" aria-label="Add Dynamic Property" className="size-4">
          <svg viewBox="0 0 16 16">
            <path d="M5.500 1h4v5h5v4h-5v5h-4v-5h-5V6h5z" fill="#22c322" stroke="#8ff08f" strokeWidth={0.8} />
            <path d="M10 11h6l-3 3z" fill="#e0e0e0" />
          </svg>
        </button>
        <button type="button" aria-label="Remove Dynamic Property" className="size-4">
          <svg viewBox="0 0 16 16">
            <path d="M1 6h15v4H1z" fill="#cfcfcf" />
          </svg>
        </button>
      </div>
    </div>
    <div className="h-5 border-y border-[#a8a8a8] bg-[#f0f0f0] pl-[3px] font-['Liberation_Mono',monospace] text-[13px] leading-5">
      pushButton : QPushButton
    </div>
    <table className="w-full table-fixed border-separate border-spacing-0">
      <colgroup>
        <col className="w-5" />
        <col className="w-[130px]" />
        <col />
      </colgroup>
      <thead>
        <tr>
          <th scope="col" colSpan={2} className="h-[29px] border-r border-[#e5e5e5] pl-[5px] text-left font-normal">属性</th>
          <th scope="col" className="pl-[5px] text-left font-normal">值</th>
        </tr>
      </thead>
      <tbody>
        <GroupRow title="QObject" />
        <tr className="bg-[#fff1de]">
          <td className="h-6 border-b border-[#d3d3d3] bg-[#ffe2ba]" />
          <th scope="row" className="border-r border-b border-[#d3d3d3] pl-[3px] text-left font-bold leading-5">objectName</th>
          <td className="border-b border-[#d3d3d3] pl-[3px] leading-5">pushButton</td>
        </tr>
        <GroupRow title="QWidget" />
        {properties.map(({ name, value, checked, expandable, modified }) => (
          <tr key={name} className="odd:bg-[#ffffbf] even:bg-[#ffffdd]">
            <td className="h-6 border-b border-[#d3d3d3] bg-[#ffffbf] pl-1">
              {expandable && <Chevron className="stroke-[#a6a678]" d="M4 1.500L8.500 6 4 10.500" />}
            </td>
            <th
              scope="row"
              className={`truncate border-r border-b border-[#d3d3d3] pr-1 pl-[3px] text-left leading-5 ${
                modified ? "font-bold" : "font-normal"
              }`}
            >
              {name}
            </th>
            <td className="border-b border-[#d3d3d3] pl-[3px] leading-5">
              {checked === undefined ? (
                value
              ) : (
                <span className="grid size-4">
                  <input
                    type="checkbox"
                    aria-label={name}
                    defaultChecked={checked}
                    className="peer col-start-1 row-start-1 size-4 appearance-none border border-[#222] bg-white"
                  />
                  <svg className="pointer-events-none col-start-1 row-start-1 hidden size-4 fill-none stroke-[#222] peer-checked:block" viewBox="0 0 16 16">
                    <path d="M3 8l3.500 3.500L13 4.500" strokeWidth={1.3} />
                  </svg>
                </span>
              )}
            </td>
          </tr>
        ))}
      </tbody>
    </table>
  </section>
);

export default function App() {
  return (
    <div className="relative flex h-screen flex-col overflow-hidden bg-white font-['Noto_Sans','Noto_Sans_CJK_SC',sans-serif] text-[15px] text-black">
      <GradientDefs />
      <MenuBar />
      <EditorToolbar />
      <div className="flex min-h-0 flex-1">
        <ModeStrip />
        <WidgetBox />
        <main className="flex min-w-0 flex-1 flex-col">
          <FormCanvas />
          <ActionEditor />
        </main>
        <aside className="flex w-[895px] shrink-0 flex-col border-l border-[#2c2d2e]">
          <ObjectInspector />
          <PropertyEditor />
        </aside>
      </div>
      <div className="pointer-events-none absolute top-[767px] right-[617px] h-[33px] w-[283px] border-3 border-[#fb3934]" />
      <p className="absolute top-[541px] right-[344px] text-xl whitespace-nowrap text-[#fb3934]">
        我们在图形化界面创建一个控件的时候，会自动给这个控件设置一个objectName，他是唯一的
      </p>
    </div>
  );
}
